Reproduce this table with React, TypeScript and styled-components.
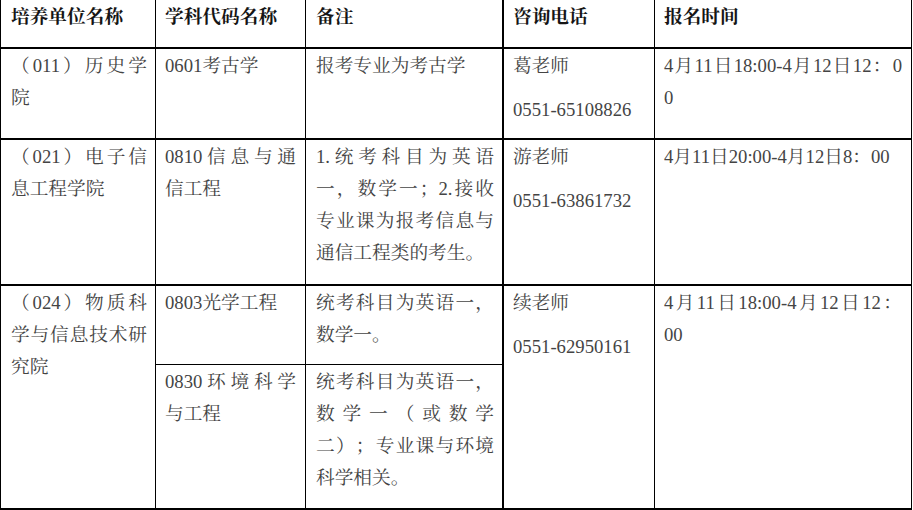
import React from "react";
import styled, { createGlobalStyle } from "styled-components";

const GlobalStyle = createGlobalStyle`
  html, body {
    margin: 0;
    padding: 0;
    background: #ffffff;
  }
`;

const Table = styled.div`
  box-sizing: border-box;
  width: 913px;
  display: grid;
  grid-template-columns: 155px 150px 198px 151px 257px;
  grid-template-rows: 49px 91px 146px 79px 145px;
  border-left: 1px solid #000;
  font-family: "Liberation Serif", "Noto Serif CJK SC", "Noto Sans CJK SC", serif;
  font-size: 18.7px;
  line-height: 32px;
  color: #444444;
  text-spacing-trim: space-all;
  text-autospace: no-autospace;
`;

const Cell = styled.div<{
  $pl: number;
  $pr: number;
  $br: number;
  $bb: number;
  $span?: number;
}>`
  box-sizing: border-box;
  min-width: 0;
  padding: 1px ${(p) => p.$pr}px 0 ${(p) => p.$pl}px;
  border-right: ${(p) => p.$br}px solid #000;
  border-bottom: ${(p) => p.$bb}px solid #000;
  grid-row: span ${(p) => p.$span ?? 1};
`;

const HeadText = styled.div`
  font-weight: 700;
  color: #151515;
`;

const Line = styled.div<{ $justify?: boolean }>`
  text-align: ${(p) => (p.$justify ? "justify" : "left")};
  text-align-last: ${(p) => (p.$justify ? "justify" : "auto")};
`;

const Name = styled.div``;

const Phone = styled.div`
  margin-top: 12px;
`;

type Col = { pl: number; pr: number; br: number };

const COLS: Col[] = [
  { pl: 10, pr: 8, br: 1 },
  { pl: 9, pr: 9, br: 1 },
  { pl: 10, pr: 8, br: 2 },
  { pl: 9, pr: 9, br: 1 },
  { pl: 9, pr: 9, br: 1 },
];

const Lines: React.FC<{ lines: string[] }> = ({ lines }) => (
  <>
    {lines.map((l, i) => (
      <Line key={i} $justify={i < lines.length - 1}>
        {l}
      </Line>
    ))}
  </>
);

type CellProps = {
  col: number;
  bb?: number;
  span?: number;
  children: React.ReactNode;
};

const TCell: React.FC<CellProps> = ({ col, bb = 2, span, children }) => {
  const c = COLS[col];
  return (
    <Cell $pl={c.pl} $pr={c.pr} $br={c.br} $bb={bb} $span={span}>
      {children}
    </Cell>
  );
};

const headers = ["培养单位名称", "学科代码名称", "备注", "咨询电话", "报名时间"];

export default function App() {
  return (
    <>
      <GlobalStyle />
      <Table>
        {headers.map((h, i) => (
          <TCell key={h} col={i}>
            <HeadText>{h}</HeadText>
          </TCell>
        ))}

        <TCell col={0}>
          <Lines lines={["（011）历史学", "院"]} />
        </TCell>
        <TCell col={1}>
          <Lines lines={["0601考古学"]} />
        </TCell>
        <TCell col={2}>
          <Lines lines={["报考专业为考古学"]} />
        </TCell>
        <TCell col={3}>
          <Name>葛老师</Name>
          <Phone>0551-65108826</Phone>
        </TCell>
        <TCell col={4}>
          <Lines lines={["4月11日18:00-4月12日12：0", "0"]} />
        </TCell>

        <TCell col={0}>
          <Lines lines={["（021）电子信", "息工程学院"]} />
        </TCell>
        <TCell col={1}>
          <Lines lines={["0810信息与通", "信工程"]} />
        </TCell>
        <TCell col={2}>
          <Lines
            lines={[
              "1.统考科目为英语",
              "一，数学一；2.接收",
              "专业课为报考信息与",
              "通信工程类的考生。",
            ]}
          />
        </TCell>
        <TCell col={3}>
          <Name>游老师</Name>
          <Phone>0551-63861732</Phone>
        </TCell>
        <TCell col={4}>
          <Lines lines={["4月11日20:00-4月12日8：00"]} />
        </TCell>

        <TCell col={0} span={2}>
          <Lines lines={["（024）物质科", "学与信息技术研", "究院"]} />
        </TCell>
        <TCell col={1} bb={1}>
          <Lines lines={["0803光学工程"]} />
        </TCell>
        <TCell col={2} bb={1}>
          <Lines lines={["统考科目为英语一，", "数学一。"]} />
        </TCell>
        <TCell col={3} span={2}>
          <Name>续老师</Name>
          <Phone>0551-62950161</Phone>
        </TCell>
        <TCell col={4} span={2}>
          <Lines lines={["4月11日18:00-4月12日12：", "00"]} />
        </TCell>
        <TCell col={1}>
          <Lines lines={["0830环境科学", "与工程"]} />
        </TCell>
        <TCell col={2}>
          <Lines
            lines={[
              "统考科目为英语一，",
              "数学一（或数学",
              "二）；专业课与环境",
              "科学相关。",
            ]}
          />
        </TCell>
      </Table>
    </>
  );
}
